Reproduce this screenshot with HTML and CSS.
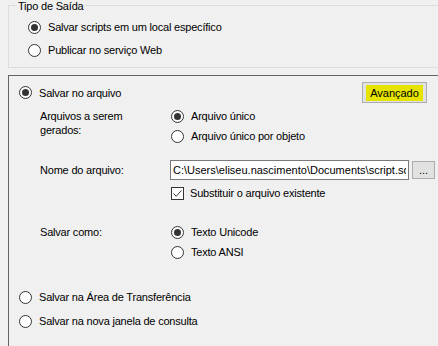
FILE: index.html
```html
<!DOCTYPE html>
<html lang="pt">
<head>
  <meta charset="UTF-8">
  <title>Opções de saída</title>
  <link rel="stylesheet" href="styles.css">
</head>
<body>
  <!-- Tipo de Saida -->
  <div class="group">
    <div class="group-title">Tipo de Saída</div>
    <div class="opts">
      <label class="opt"><span class="radio on"></span>Salvar scripts em um local específico</label>
      <label class="opt"><span class="radio"></span>Publicar no serviço Web</label>
    </div>
  </div>

  <!-- Painel de opcoes -->
  <div class="panel">
    <div class="head">
      <label class="opt"><span class="radio on"></span>Salvar no arquivo</label>
      <button class="btn adv"><span class="mark">Avançado</span></button>
    </div>

    <div class="field files">
      <div class="label multi">Arquivos a serem<br>gerados:</div>
      <div class="choices">
        <label class="opt"><span class="radio on"></span>Arquivo único</label>
        <label class="opt"><span class="radio"></span>Arquivo único por objeto</label>
      </div>
    </div>

    <div class="field name">
      <div class="label line">Nome do arquivo:</div>
      <div class="choices">
        <div class="path">
          <input class="path-input" type="text" value="C:\Users\eliseu.nascimento\Documents\script.sql">
          <button class="btn browse">...</button>
        </div>
        <label class="opt check-row">
          <span class="check">
            <svg width="11" height="11" viewBox="0 0 11 11"><polyline points="1.5,5.5 4.2,8.2 9.5,2.5" fill="none" stroke="#333" stroke-width="1"/></svg>
          </span>Substituir o arquivo existente
        </label>
      </div>
    </div>

    <div class="field enc">
      <div class="label line">Salvar como:</div>
      <div class="choices">
        <label class="opt"><span class="radio on"></span>Texto Unicode</label>
        <label class="opt"><span class="radio"></span>Texto ANSI</label>
      </div>
    </div>

    <div class="bottom">
      <label class="opt"><span class="radio"></span>Salvar na Área de Transferência</label>
      <label class="opt"><span class="radio"></span>Salvar na nova janela de consulta</label>
    </div>
  </div>
</body>
</html>
```

FILE: styles.css
```css
:root {
  --face: #f0f0f0;
  --group-line: #dcdcdc;
  --panel-line: #646464;
  --control-line: #333333;
  --button-bg: #e1e1e1;
  --button-line: #adadad;
  --marker: #e4e400;
}

body, html {
  margin: 0;
  padding: 0;
  height: 100%;
  overflow: hidden;
}

body {
  display: flex;
  flex-direction: column;
  background: var(--face);
  color: #000;
  font-family: "Liberation Sans", Arial, sans-serif;
  font-size: 11px;
  letter-spacing: -0.2px;
}

/* Group box */
.group {
  margin: 5px 0 0 8px;
  border: 1px solid var(--group-line);
  border-right: none;
  padding: 0 0 7px 19px;
}

.group-title {
  width: max-content;
  margin: -6px 0 0 -11px;
  padding: 0 1px;
  background: var(--face);
  line-height: 13px;
}

.opts {
  display: flex;
  flex-direction: column;
  gap: 3px;
  margin-top: 4px;
}

/* Options */
.opt {
  display: flex;
  align-items: center;
  gap: 7px;
  height: 20px;
  white-space: nowrap;
}

.radio {
  flex: none;
  box-sizing: border-box;
  width: 13px;
  height: 13px;
  border: 1px solid var(--control-line);
  border-radius: 50%;
  background: #fff;
  display: flex;
  align-items: center;
  justify-content: center;
}

.radio.on::after {
  content: '';
  width: 7px;
  height: 7px;
  border-radius: 50%;
  background: var(--control-line);
}

.check {
  flex: none;
  box-sizing: border-box;
  width: 13px;
  height: 13px;
  border: 1px solid var(--control-line);
  background: #fff;
  display: flex;
}

/* Panel */
.panel {
  flex: 1;
  min-height: 0;
  margin: 7px 0 0 8px;
  border-top: 1px solid var(--panel-line);
  border-left: 1px solid var(--panel-line);
}

.head {
  display: flex;
  justify-content: space-between;
  align-items: center;
  padding: 6px 11px 0 10px;
}

.btn {
  box-sizing: border-box;
  border: 1px solid var(--button-line);
  background: var(--button-bg);
  font: inherit;
  color: #000;
  padding: 0;
  display: flex;
  align-items: center;
  justify-content: center;
}

.adv {
  width: 65px;
  height: 21px;
}

.mark {
  background: var(--marker);
  padding: 2px 4px;
  line-height: 12px;
}

/* Fields */
.field {
  display: grid;
  grid-template-columns: 131px 1fr;
  padding-left: 31px;
}

.files {
  margin-top: 3px;
}

.name {
  margin-top: 14px;
}

.enc {
  margin-top: 19px;
}

.label.multi {
  padding-top: 3px;
  line-height: 14px;
}

.label.line {
  line-height: 20px;
}

.choices {
  display: flex;
  flex-direction: column;
}

.path {
  display: flex;
  align-items: center;
  gap: 3px;
  margin-left: -1px;
}

.path-input {
  box-sizing: border-box;
  width: 239px;
  height: 20px;
  margin: 0;
  padding: 0 2px;
  border: 1px solid #7a7a7a;
  background: #fff;
  font: inherit;
  color: #000;
  outline: none;
}

.browse {
  width: 23px;
  height: 18px;
  line-height: 12px;
}

.check-row {
  margin-top: 3px;
  gap: 6px;
}

/* Bottom options */
.bottom {
  display: flex;
  flex-direction: column;
  gap: 4px;
  margin-top: 25px;
  padding-left: 10px;
}
```
